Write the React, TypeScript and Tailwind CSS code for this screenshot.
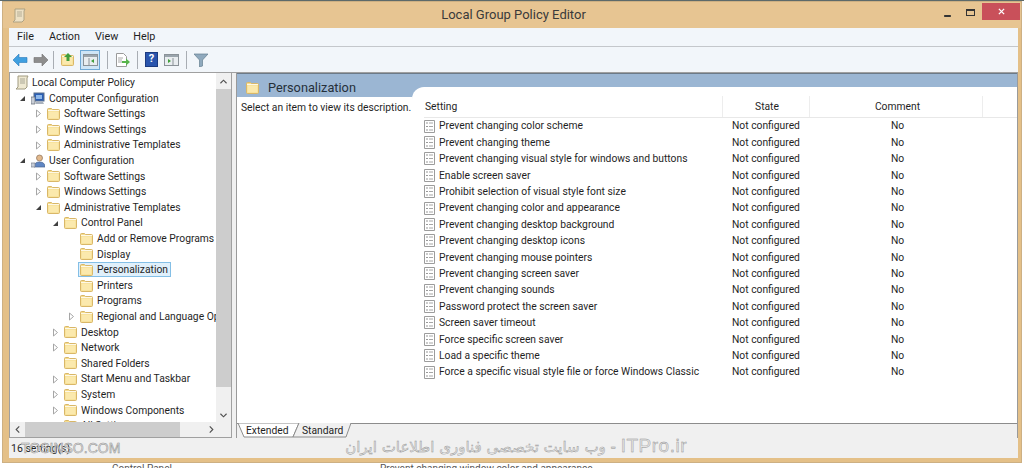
const Folder = ({ className = "w-[13px] h-[12px]" }: { className?: string }) => (
  <svg viewBox="0 0 13 12" className={`${className} shrink-0`}>
    <path d="M.5 2V1.500q0-1 1-1h3l1 1h6q1 0 1 1v8q0 1-1 1h-10q-1 0-1-1z" fill="#f6dd8e" stroke="#d9b768" />
    <path d="M1.500 3.500h10v7h-10z" fill="#fbe9ad" />
    <path d="M1 2.500h11" stroke="#fff" strokeWidth=".8" />
  </svg>
);

const Scroll = ({ className = "" }: { className?: string }) => (
  <svg viewBox="0 0 14 15" className={`w-[14px] h-[15px] shrink-0 ${className}`}>
    <path d="M3 1h10l-1 2v9l-2 2H1l2-2z" fill="#efe9d2" stroke="#a09a80" />
    <path d="M5 4h5M5 6h5M5 8h5" stroke="#8d8d80" strokeWidth=".7" />
  </svg>
);

const Computer = () => (
  <svg viewBox="0 0 14 13" className="w-[14px] h-[13px] shrink-0">
    <rect x="3" y="1" width="10" height="8" fill="#2a5fb5" stroke="#5a6f8c" />
    <rect x="5" y="3" width="6" height="4" fill="#8fb8ea" />
    <path d="M0 5h4v7H0z" fill="#c9ced6" stroke="#6f7680" strokeWidth=".8" />
    <path d="M5 10h7l1 2H5z" fill="#aab2bd" />
  </svg>
);

const User = () => (
  <svg viewBox="0 0 14 14" className="w-[14px] h-[14px] shrink-0">
    <circle cx="8.500" cy="4" r="3" fill="#e2b98d" stroke="#8c7058" strokeWidth=".7" />
    <path d="M3 13q0-5 5.500-5T14 13z" fill="#5f86c4" stroke="#4a648f" strokeWidth=".7" />
    <path d="M0 9h4v4H0z" fill="#c8ced8" stroke="#78808c" strokeWidth=".7" />
  </svg>
);

const SettingIcon = () => (
  <svg viewBox="0 0 11 13" className="w-[11px] h-[13px] shrink-0">
    <path d="M.5.500h10v12H.5z" fill="#fff" stroke="#9c9c9c" />
    <path d="M2.500 3h1M2.500 6.500h1M2.500 10h1" stroke="#333" strokeWidth="1.200" />
    <path d="M5 3h4M5 6.500h4M5 10h4" stroke="#a6a6a6" />
  </svg>
);

const Expander = ({ state }: { state: "open" | "closed" | "none" }) => {
  if (state === "none") return <span className="w-[9px] shrink-0" />;
  return (
    <svg viewBox="0 0 9 9" className="w-[9px] h-[9px] shrink-0">
      {state === "open" ? (
        <path d="M7 2v5H2z" fill="#404040" />
      ) : (
        <path d="M2.500 1l4 3.500-4 3.500z" fill="#fff" stroke="#a6a6a6" />
      )}
    </svg>
  );
};

const depthClass = [
  "pl-[5px]",
  "pl-[8px]",
  "pl-[24px]",
  "pl-[41px]",
  "pl-[57px]",
];

type TreeRow = {
  label: string;
  depth: number;
  state: "open" | "closed" | "none";
  icon?: "computer" | "user";
  selected?: boolean;
};

const tree: TreeRow[] = [
  { label: "Computer Configuration", depth: 1, state: "open", icon: "computer" },
  { label: "Software Settings", depth: 2, state: "closed" },
  { label: "Windows Settings", depth: 2, state: "closed" },
  { label: "Administrative Templates", depth: 2, state: "closed" },
  { label: "User Configuration", depth: 1, state: "open", icon: "user" },
  { label: "Software Settings", depth: 2, state: "closed" },
  { label: "Windows Settings", depth: 2, state: "closed" },
  { label: "Administrative Templates", depth: 2, state: "open" },
  { label: "Control Panel", depth: 3, state: "open" },
  { label: "Add or Remove Programs", depth: 4, state: "none" },
  { label: "Display", depth: 4, state: "none" },
  { label: "Personalization", depth: 4, state: "none", selected: true },
  { label: "Printers", depth: 4, state: "none" },
  { label: "Programs", depth: 4, state: "none" },
  { label: "Regional and Language Options", depth: 4, state: "closed" },
  { label: "Desktop", depth: 3, state: "closed" },
  { label: "Network", depth: 3, state: "closed" },
  { label: "Shared Folders", depth: 3, state: "none" },
  { label: "Start Menu and Taskbar", depth: 3, state: "closed" },
  { label: "System", depth: 3, state: "closed" },
  { label: "Windows Components", depth: 3, state: "closed" },
  { label: "All Settings", depth: 3, state: "none" },
];

const settings = [
  "Prevent changing color scheme",
  "Prevent changing theme",
  "Prevent changing visual style for windows and buttons",
  "Enable screen saver",
  "Prohibit selection of visual style font size",
  "Prevent changing color and appearance",
  "Prevent changing desktop background",
  "Prevent changing desktop icons",
  "Prevent changing mouse pointers",
  "Prevent changing screen saver",
  "Prevent changing sounds",
  "Password protect the screen saver",
  "Screen saver timeout",
  "Force specific screen saver",
  "Load a specific theme",
  "Force a specific visual style file or force Windows Classic",
];

const Sep = () => <span className="w-px h-[18px] bg-[#a8adb3] mx-[4px]" />;

export default function App() {
  return (
    <div className="relative w-[1024px] h-[468px] overflow-hidden bg-white text-[10.300px] text-[#1f1f1f] font-['Roboto',sans-serif]">
      <div className="h-px bg-[#5d6a6a]" />
      <div className="mx-[2px] h-[462px] bg-[#e4c088] flex flex-col border border-[#cdb083]">
        {/* Title bar */}
        <div className="h-[26px] flex items-center relative shrink-0 bg-[#e7c592]">
          <Scroll className="ml-[9px] opacity-80" />
          <span className="flex-1 text-center text-[13px] text-[#3a3a3a] pl-[57px]">Local Group Policy Editor</span>
          <svg viewBox="0 0 10 3" className="w-[7px] h-[2px] mr-[15px] mt-[1px]"><rect width="10" height="3" fill="#333" /></svg>
          <span className="w-[9px] h-[7px] -mt-[5px] border border-[#333] border-t-2 mr-[7px]" />
          <span className="w-[38px] h-[17px] -mt-[7px] bg-[#c9505a] text-white flex items-center justify-center mr-[1px]">
            <svg viewBox="0 0 8 8" className="w-[7px] h-[7px]"><path d="M1 1l6 6M7 1L1 7" stroke="#fff" strokeWidth="1.500" /></svg>
          </span>
        </div>

        <div className="ml-[6px] mr-[3px] flex flex-col flex-1 min-h-0 bg-[#f0f0f0]">
          {/* Menu */}
          <div className="h-[19px] shrink-0 flex items-center gap-[15px] pl-[8px] bg-[#f2f6fa] border-b border-[#c4c7cb] text-[10.800px]">
            <span>File</span>
            <span>Action</span>
            <span>View</span>
            <span>Help</span>
          </div>

          {/* Toolbar */}
          <div className="h-[25px] shrink-0 flex items-center pl-[4px] bg-[#f2f6fa]">
            <svg viewBox="0 0 15 12" className="w-[15px] h-[12px] mr-[5px]"><path d="M0 6l6-6v3.500h8v5H6V12z" fill="#3f9fe0" stroke="#2a78b8" strokeWidth=".6" /></svg>
            <svg viewBox="0 0 15 12" className="w-[15px] h-[12px] mr-[1px]"><path d="M15 6L9 0v3.500H1v5h8V12z" fill="#8d8d8d" stroke="#707070" strokeWidth=".6" /></svg>
            <Sep />
            <span className="relative mx-[3px]">
              <Folder className="w-[13px] h-[12px]" />
              <svg viewBox="0 0 8 8" className="absolute left-[3px] -top-[1px] w-[8px] h-[8px]"><path d="M4 0l4 4H5.500v4h-3V4H0z" fill="#3f9e3a" /></svg>
            </span>
            <span className="w-[20px] h-[20px] mx-[3px] bg-[#cfe5f6] border border-[#6fa9d6] flex items-center justify-center">
              <svg viewBox="0 0 15 12" className="w-[15px] h-[12px]"><rect x=".5" y=".5" width="14" height="11" fill="#e9edf0" stroke="#8a9298" /><path d="M1 1h13v2H1z" fill="#9aa4ac" /><path d="M6 4v7" stroke="#8a9298" /><path d="M11 5v4L8 7z" fill="#3f9e3a" /></svg>
            </span>
            <Sep />
            <svg viewBox="0 0 15 14" className="w-[15px] h-[14px] mx-[3px]"><path d="M1.500.5h7l3 3v10h-10z" fill="#fff" stroke="#9a9a9a" /><path d="M3 5h5M3 7h4M3 9h4" stroke="#a9a9a9" /><path d="M7 8h4V5.500L15 9l-4 3.500V10H7z" fill="#58b44c" /></svg>
            <Sep />
            <span className="w-[13px] h-[15px] mx-[3px] bg-[#2a55ad] border border-[#1c3b80] text-white text-[11px] font-bold flex items-center justify-center">?</span>
            <svg viewBox="0 0 15 12" className="w-[15px] h-[12px] mx-[3px]"><rect x=".5" y=".5" width="14" height="11" fill="#e9edf0" stroke="#8a9298" /><path d="M1 1h13v2H1z" fill="#9aa4ac" /><path d="M9 4v7" stroke="#8a9298" /><path d="M4 5v4l3-2z" fill="#3f9e3a" /></svg>
            <Sep />
            <svg viewBox="0 0 14 14" className="w-[14px] h-[14px] mx-[3px]"><path d="M0 1h14L8.500 7v6l-3 1V7z" fill="#8fa9bd" stroke="#66808f" strokeWidth=".7" /></svg>
          </div>

          {/* Panes */}
          <div className="h-[366px] shrink-0 flex border-t border-[#a0a0a0]">
            {/* Tree */}
            <div className="w-[223px] shrink-0 flex flex-col bg-white border border-[#a0a0a0] border-t-0">
              <div className="flex flex-1 min-h-0">
                <div className="flex-1 min-w-0 overflow-hidden pt-[2px]">
                  <div className="h-[15.600px] flex items-center gap-[3px] pl-[5px] whitespace-nowrap">
                    <Scroll />
                    <span>Local Computer Policy</span>
                  </div>
                  {tree.map((row, i) => (
                    <div key={i} className={`h-[15.600px] flex items-center whitespace-nowrap ${depthClass[row.depth]}`}>
                      <Expander state={row.state} />
                      <span className={`flex items-center gap-[4px] ml-[2px] pl-[1px] pr-[2px] h-[15px] border ${row.selected ? "bg-[#e0f0fb] border-[#84bfe6]" : "border-transparent"}`}>
                        {row.icon === "computer" ? <Computer /> : row.icon === "user" ? <User /> : <Folder />}
                        <span>{row.label}</span>
                      </span>
                    </div>
                  ))}
                </div>
                {/* vertical scrollbar */}
                <div className="w-[15px] shrink-0 flex flex-col items-center bg-[#f0f0f0]">
                  <svg viewBox="0 0 8 5" className="w-[7px] h-[5px] mt-[6px] mb-[5px]"><path d="M.5 4.500L4 1l3.500 3.500" fill="none" stroke="#505050" strokeWidth="1.300" /></svg>
                  <div className="w-full h-[298px] bg-[#cdcdcd]" />
                  <svg viewBox="0 0 8 5" className="w-[7px] h-[5px] mt-auto mb-[4px]"><path d="M.5.500L4 4l3.500-3.500" fill="none" stroke="#505050" strokeWidth="1.300" /></svg>
                </div>
              </div>
              {/* horizontal scrollbar */}
              <div className="h-[15px] shrink-0 flex items-center bg-[#f0f0f0] pr-[15px]">
                <svg viewBox="0 0 5 8" className="w-[5px] h-[7px] ml-[5px] mr-[5px]"><path d="M4.500.500L1 4l3.500 3.500" fill="none" stroke="#505050" strokeWidth="1.300" /></svg>
                <div className="w-[155px] h-full bg-[#cdcdcd]" />
                <svg viewBox="0 0 5 8" className="w-[5px] h-[7px] ml-auto mr-[2px]"><path d="M.5.500L4 4 .5 7.500" fill="none" stroke="#505050" strokeWidth="1.300" /></svg>
              </div>
            </div>

            {/* Splitter */}
            <div className="w-[4px] shrink-0" />

            {/* Right side */}
            <div className="flex-1 min-w-0 flex flex-col border-l border-r border-[#9a9a9a]">
              <div className="flex-1 min-h-0 flex bg-[#9bb6d3] border-t border-[#6c7a88]">
                <div className="w-[175px] shrink-0 flex flex-col">
                  <div className="h-[23px] shrink-0 flex items-center gap-[9px] pl-[9px] pt-[4px] text-[12.750px] text-[#26303a]">
                    <Folder />
                    <span>Personalization</span>
                  </div>
                  <div className="flex-1 bg-white pl-[4px] pt-[3px] whitespace-nowrap">Select an item to view its description.</div>
                </div>
                <div className="flex-1 min-w-0 mt-[13px] bg-white rounded-tl-[12px] pl-[12px]">
                  <div className="h-[31px] pt-[9px] flex items-center border-b border-[#e8e8e8]">
                    <span className="w-[299px] pl-[1px] h-full flex items-center border-r border-[#ededed]">Setting</span>
                    <span className="w-[87px] h-full flex items-center justify-center border-r border-[#ededed] pl-[2px]">State</span>
                    <span className="w-[173px] h-full flex items-center justify-center border-r border-[#ededed] pl-[3px]">Comment</span>
                  </div>
                  {settings.map((s) => (
                    <div key={s} className="h-[16.400px] flex items-center whitespace-nowrap">
                      <span className="w-[308px] flex items-center gap-[4px]">
                        <SettingIcon />
                        <span>{s}</span>
                      </span>
                      <span className="w-[159px]">Not configured</span>
                      <span>No</span>
                    </div>
                  ))}
                </div>
              </div>
              {/* Tabs */}
              <div className="relative h-[15px] shrink-0 flex items-center bg-[#f0f0f0] border-t border-[#8c8c8c] pl-[9px]">
                <svg viewBox="0 0 116 15" className="absolute left-0 -top-px w-[116px] h-[15px]">
                  <path d="M1 0l6 14h49l6-14z" fill="#fff" stroke="#8c8c8c" />
                  <path d="M62 0l-6 14h53l5-14" fill="#f0f0f0" stroke="#8c8c8c" />
                </svg>
                <span className="relative w-[56px]">Extended</span>
                <span className="relative">Standard</span>
              </div>
            </div>
          </div>

          {/* Status bar */}
          <div className="flex-1 min-h-0 mt-[2px] flex items-center pl-[2px] text-[10.500px] bg-[#f0f0f0]">
            <span>16 setting(s)</span>
          </div>
        </div>
        <div className="h-[4px] shrink-0" />
      </div>

      {/* What shows of the page behind the window */}
      <div className="h-[5px] overflow-hidden flex items-start text-[10px] leading-[12px] text-[#555]">
        <span className="ml-[112px] w-[268px]">Control Panel</span>
        <span>Prevent changing window color and appearance</span>
      </div>

      {/* Video watermarks on top of the status bar */}
      <span className="absolute left-[21px] top-[438px] text-[14px] text-[#e6e6e6] font-['Liberation_Sans',sans-serif] [-webkit-text-stroke:0.5px_#8f8f8f]">TOSINSO.COM</span>
      <span dir="rtl" className="absolute right-[337px] top-[432px] text-[15px] text-[#e4e4e4] font-['DejaVu_Sans',sans-serif] [-webkit-text-stroke:0.4px_#8f8f8f] whitespace-nowrap">
        <span className="text-[19px] font-['Liberation_Sans',sans-serif] tracking-[0.5px]">ITPro.ir</span> - وب سایت تخصصی فناوری اطلاعات ایران
      </span>
    </div>
  );
}
